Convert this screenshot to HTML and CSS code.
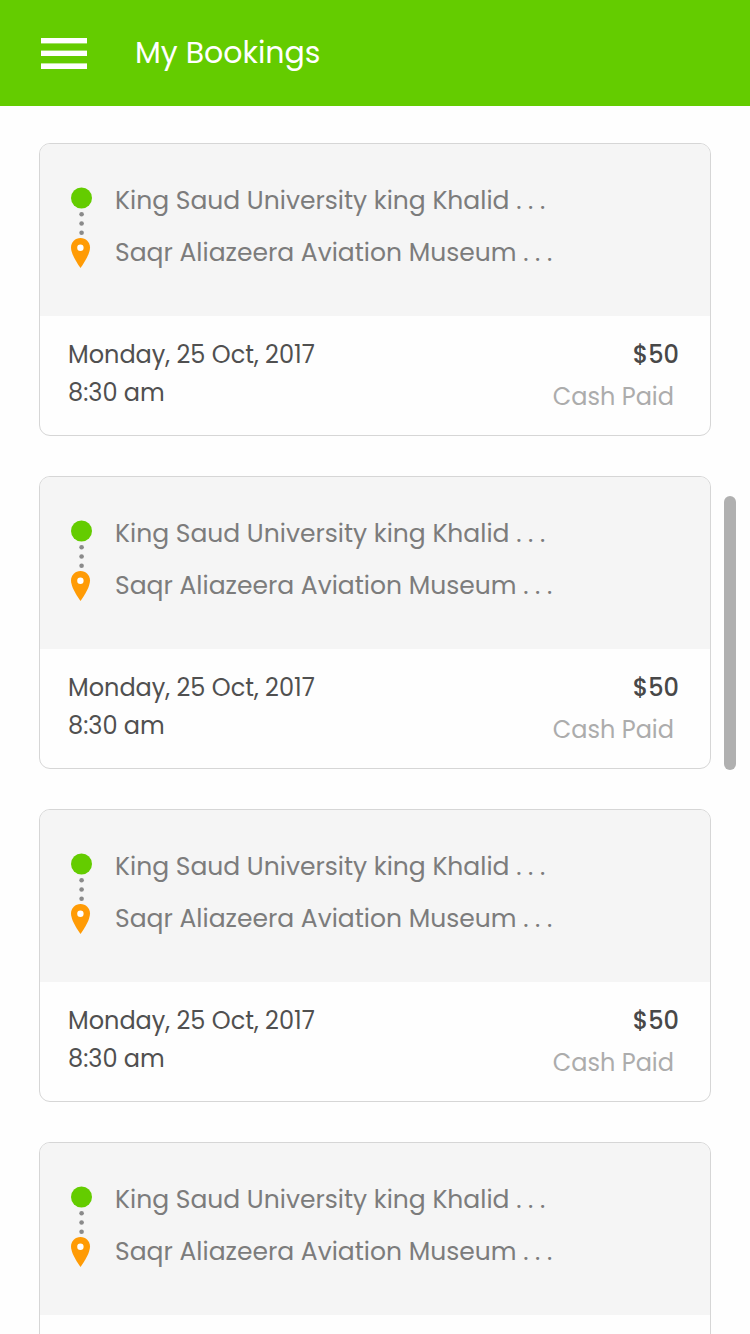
FILE: index.html
```html
<!DOCTYPE html>
<html lang="en">
<head>
    <meta charset="UTF-8">
    <meta name="viewport" content="width=device-width, initial-scale=1.0">
    <title>My Bookings</title>
    <link rel="stylesheet" href="styles.css">
</head>
<body>

    <svg class="sprite" aria-hidden="true">
        <symbol id="route" viewBox="0 0 21 82">
            <circle cx="10.5" cy="11" r="10.5" fill="#64cc00"/>
            <g fill="#8a8a8a">
                <circle cx="10.6" cy="27.3" r="2.3"/>
                <circle cx="10.6" cy="36.5" r="2.3"/>
                <circle cx="10.6" cy="45.7" r="2.3"/>
            </g>
            <path fill="#ff9b05" d="M9.5 51C4.200 51 0 55.200 0 60.500C0 66.500 5 74.500 9.500 81C14 74.500 19 66.500 19 60.500C19 55.200 14.800 51 9.500 51Z"/>
            <circle cx="9.4" cy="60.8" r="3.2" fill="#fff"/>
        </symbol>
    </svg>

    <header class="topbar">
        <button class="menu" type="button" aria-label="Menu">
            <svg width="46" height="31" viewBox="0 0 46 31" fill="#fff">
                <rect width="46" height="5.400"/>
                <rect y="12.600" width="46" height="5.400"/>
                <rect y="25.400" width="46" height="5.600"/>
            </svg>
        </button>
        <h1 class="title">My Bookings</h1>
    </header>

    <main class="bookings">
        <article class="card">
            <div class="trip">
                <svg class="route"><use href="#route"/></svg>
                <div class="places">
                    <p class="from">King Saud University king Khalid . . .</p>
                    <p class="to">Saqr Aliazeera Aviation Museum . . .</p>
                </div>
            </div>
            <div class="details">
                <div class="when">
                    <p>Monday, 25 Oct, 2017</p>
                    <p>8:30 am</p>
                </div>
                <div class="payment">
                    <p class="price">$50</p>
                    <p class="status">Cash Paid</p>
                </div>
            </div>
        </article>

        <article class="card">
            <div class="trip">
                <svg class="route"><use href="#route"/></svg>
                <div class="places">
                    <p class="from">King Saud University king Khalid . . .</p>
                    <p class="to">Saqr Aliazeera Aviation Museum . . .</p>
                </div>
            </div>
            <div class="details">
                <div class="when">
                    <p>Monday, 25 Oct, 2017</p>
                    <p>8:30 am</p>
                </div>
                <div class="payment">
                    <p class="price">$50</p>
                    <p class="status">Cash Paid</p>
                </div>
            </div>
        </article>

        <article class="card">
            <div class="trip">
                <svg class="route"><use href="#route"/></svg>
                <div class="places">
                    <p class="from">King Saud University king Khalid . . .</p>
                    <p class="to">Saqr Aliazeera Aviation Museum . . .</p>
                </div>
            </div>
            <div class="details">
                <div class="when">
                    <p>Monday, 25 Oct, 2017</p>
                    <p>8:30 am</p>
                </div>
                <div class="payment">
                    <p class="price">$50</p>
                    <p class="status">Cash Paid</p>
                </div>
            </div>
        </article>

        <article class="card">
            <div class="trip">
                <svg class="route"><use href="#route"/></svg>
                <div class="places">
                    <p class="from">King Saud University king Khalid . . .</p>
                    <p class="to">Saqr Aliazeera Aviation Museum . . .</p>
                </div>
            </div>
            <div class="details">
                <div class="when">
                    <p>Monday, 25 Oct, 2017</p>
                    <p>8:30 am</p>
                </div>
                <div class="payment">
                    <p class="price">$50</p>
                    <p class="status">Cash Paid</p>
                </div>
            </div>
        </article>
    </main>

    <div class="scroll-thumb"></div>

</body>
</html>
```

FILE: styles.css
```css
* {
    box-sizing: border-box;
}
body {
    margin: 0;
    height: 100vh;
    display: flex;
    flex-direction: column;
    overflow: hidden;
    background: #fefefe;
    color: #505050;
    font-family: Poppins, Inter, sans-serif;
    font-size: 24px;
    font-weight: 400;
    line-height: 38px;
}
p, h1 {
    margin: 0;
}
.sprite {
    position: absolute;
    width: 0;
    height: 0;
}
.topbar {
    flex: none;
    display: flex;
    align-items: center;
    gap: 48px;
    height: 106px;
    padding: 0 41px;
    background: #64cc00;
    color: #fff;
}
.menu {
    padding: 0;
    border: 0;
    background: none;
    cursor: pointer;
}
.menu svg {
    display: block;
}
.title {
    font-size: 30px;
    font-weight: 400;
}
.bookings {
    flex: 1;
    min-height: 0;
    display: flex;
    flex-direction: column;
    gap: 40px;
    padding: 37px 39px;
    overflow-y: auto;
    scrollbar-width: none;
}
.card {
    flex: none;
    border: 1px solid #d6d6d6;
    border-radius: 11px;
    overflow: hidden;
}
.trip {
    display: flex;
    gap: 23px;
    padding: 31px 31px 37px;
    background: #f5f5f5;
    color: #7c7c7c;
    font-size: 25px;
    line-height: 52px;
}
.route {
    flex: none;
    width: 21px;
    height: 82px;
    margin-top: 12px;
}
.details {
    display: flex;
    justify-content: space-between;
    padding: 20px 31px 19px 28px;
}
.payment {
    display: flex;
    flex-direction: column;
    gap: 4px;
    text-align: right;
}
.price {
    color: #484848;
    font-weight: 500;
}
.status {
    padding-right: 5px;
    color: #acacac;
}
.scroll-thumb {
    position: fixed;
    top: 496px;
    right: 14px;
    width: 12px;
    height: 274px;
    border-radius: 6px;
    background: #b0b0b0;
}
```
